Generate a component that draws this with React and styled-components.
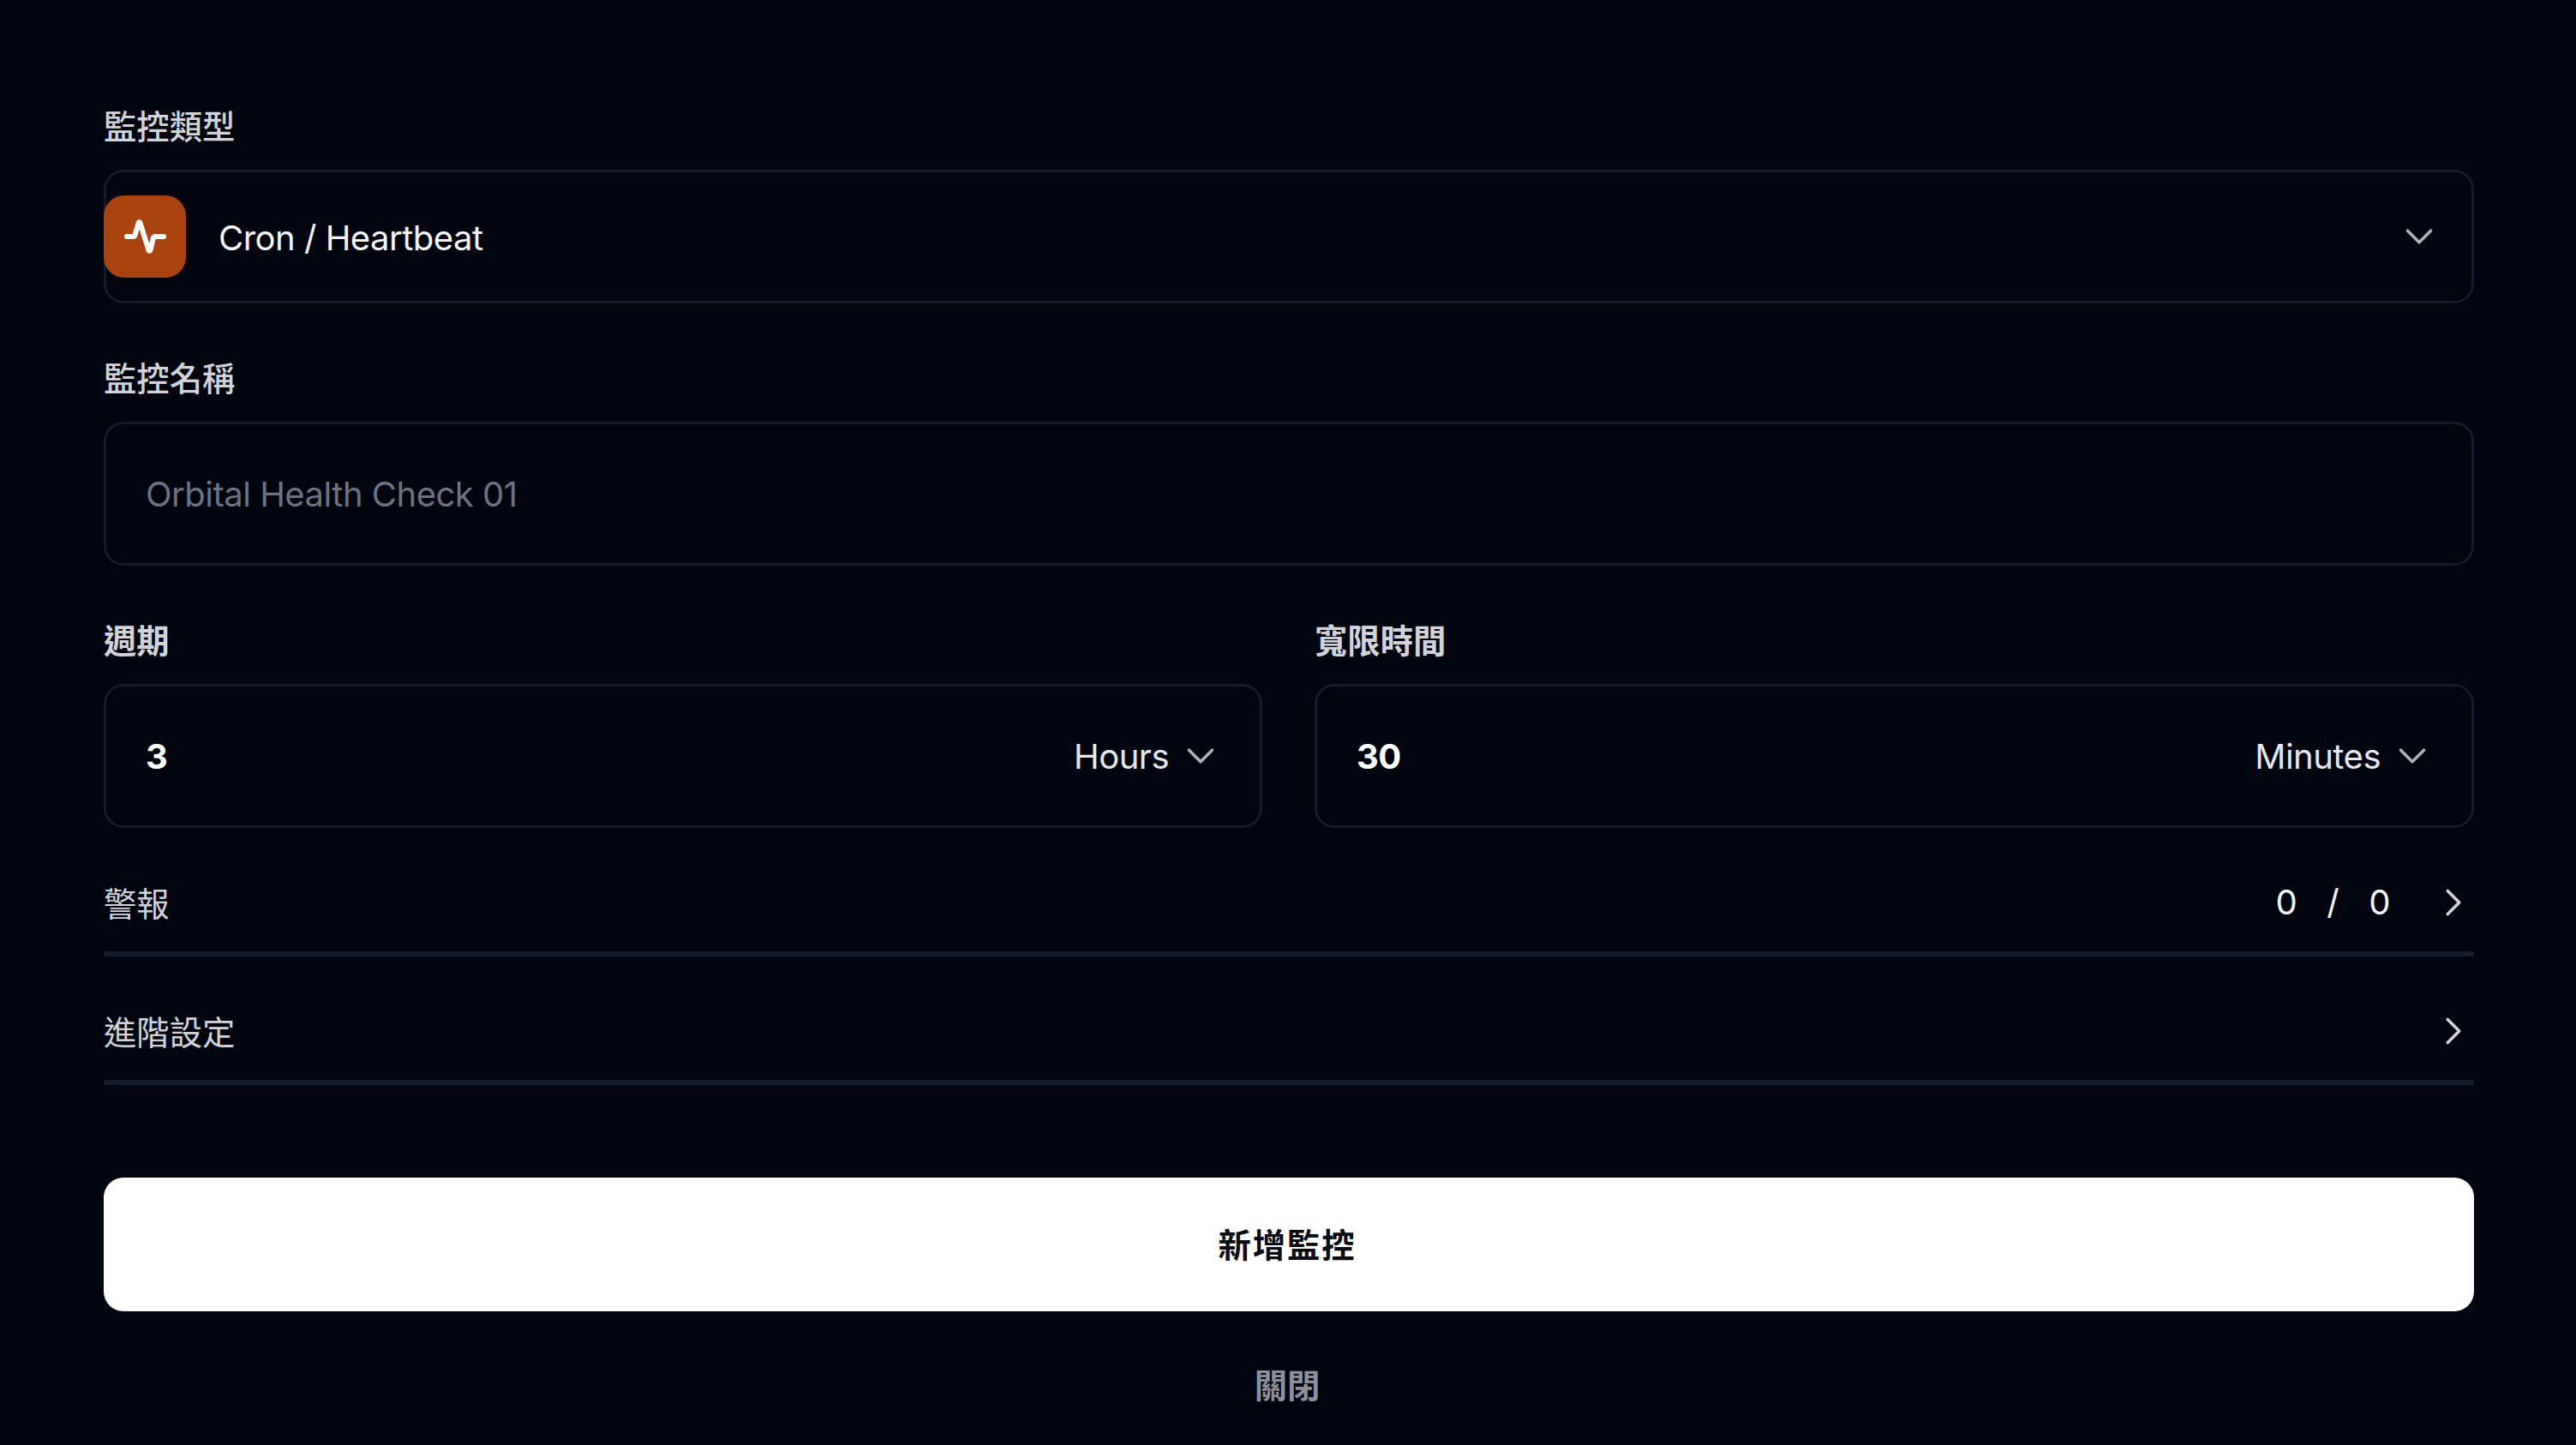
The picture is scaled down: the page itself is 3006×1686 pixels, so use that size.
import React from "react";
import styled, { createGlobalStyle } from "styled-components";
import { ChevronDown, ChevronRight } from "lucide-react";

const CJK = `Inter, "Noto Sans CJK TC", sans-serif`;

const Global = createGlobalStyle`
  html, body {
    margin: 0;
    background: #01050f;
    font-family: ${CJK};
  }
`;

const Page = styled.div`
  width: 3006px;
  height: 1686px;
  box-sizing: border-box;
  padding: 125px 119px 0 121px;
  display: flex;
  flex-direction: column;
  overflow: hidden;
`;

const Label = styled.div`
  font-size: 38.33px;
  line-height: 46px;
  font-weight: ${(p) => (p.$bold ? 700 : 500)};
  color: #d1d3d8;
  margin-bottom: 27px;
`;

const SelectBox = styled.div`
  height: 156px;
  box-sizing: border-box;
  border: 3px solid #141b2b;
  border-radius: 23px;
  display: flex;
  align-items: center;
  padding-right: 34px;
  margin-bottom: 65px;
`;

const IconTile = styled.div`
  width: 96px;
  height: 96px;
  border-radius: 24px;
  background: #ab4311;
  display: flex;
  align-items: center;
  justify-content: center;
  margin-left: -3px;
  margin-right: 38px;
`;

const SelectText = styled.div`
  flex: 1;
  padding-top: 2px;
  font-size: 40px;
  letter-spacing: -0.5px;
  color: #f3f4f6;
`;

const InputBox = styled.div`
  height: 168px;
  box-sizing: border-box;
  border: 3px solid #141b2b;
  border-radius: 23px;
  display: flex;
  align-items: center;
  padding: 0 42px 0 46px;
  font-size: 40px;
  letter-spacing: -0.5px;
  color: ${(p) => (p.$placeholder ? "#6b7280" : "#fff")};
  margin-bottom: ${(p) => p.$mb || 0}px;
`;

const Columns = styled.div`
  display: grid;
  grid-template-columns: 1352px 1fr;
  column-gap: 61px;
  margin-bottom: 30px;
`;

const Value = styled.div`
  flex: 1;
  font-weight: 700;
`;

const Unit = styled.div`
  display: flex;
  align-items: center;
  gap: 10px;
  color: #e5e7eb;
`;

const Row = styled.div`
  height: 120px;
  padding-bottom: 1px;
  box-sizing: border-box;
  display: flex;
  align-items: center;
  justify-content: space-between;
  border-bottom: 6px solid #141b2b;
  font-size: 38.33px;
  color: #d1d3d8;
  margin-bottom: ${(p) => p.$mb || 0}px;
`;

const Counter = styled.div`
  display: flex;
  align-items: center;
  gap: 35px;
  font-size: 40px;
  letter-spacing: -0.5px;
  color: #f3f4f6;
`;

const RowChevron = styled(ChevronRight)`
  margin-right: -3px;
  margin-left: ${(p) => p.$ml || 0}px;
`;

const Primary = styled.button`
  height: 156px;
  border: 0;
  border-radius: 23px;
  padding: 0 4px 3px 0;
  background: #fff;
  color: #0b0d14;
  font-family: ${CJK};
  font-weight: 700;
  font-size: 38.33px;
  letter-spacing: 1.9px;
`;

const Close = styled.button`
  margin-top: 57px;
  padding: 0 4px 0 0;
  background: none;
  border: 0;
  color: #8d9099;
  font-family: ${CJK};
  font-weight: 700;
  font-size: 38.33px;
`;

const Pulse = () => (
  <svg width="49" height="42" viewBox="0 0 49 42" fill="none" stroke="#fff" strokeWidth="6" strokeLinecap="round" strokeLinejoin="round">
    <path d="M3 21h7.5a2 2 0 0 0 1.9-1.4L16.6 5a1 1 0 0 1 1.9 0l10 32a1 1 0 0 0 1.9 0l3.4-14a2.5 2.5 0 0 1 2.4-2H46" />
  </svg>
);

const Down = () => <ChevronDown size={54} strokeWidth={1.6} color="#aeb0b7" />;

export default function App() {
  return (
    <Page>
      <Global />
      <Label>監控類型</Label>
      <SelectBox>
        <IconTile>
          <Pulse />
        </IconTile>
        <SelectText>Cron / Heartbeat</SelectText>
        <Down />
      </SelectBox>
      <Label>監控名稱</Label>
      <InputBox $placeholder $mb={65}>Orbital Health Check 01</InputBox>
      <Columns>
        <div>
          <Label $bold>週期</Label>
          <InputBox>
            <Value>3</Value>
            <Unit>Hours <Down /></Unit>
          </InputBox>
        </div>
        <div>
          <Label $bold>寬限時間</Label>
          <InputBox>
            <Value>30</Value>
            <Unit>Minutes <Down /></Unit>
          </InputBox>
        </div>
      </Columns>
      <Row $mb={30}>
        警報
        <Counter>
          <span>0</span><span>/</span><span>0</span>
          <RowChevron size={54} strokeWidth={1.6} color="#d1d3d8" $ml={12} />
        </Counter>
      </Row>
      <Row $mb={108}>
        進階設定
        <RowChevron size={54} strokeWidth={1.6} color="#d1d3d8" />
      </Row>
      <Primary>新增監控</Primary>
      <Close>關閉</Close>
    </Page>
  );
}
